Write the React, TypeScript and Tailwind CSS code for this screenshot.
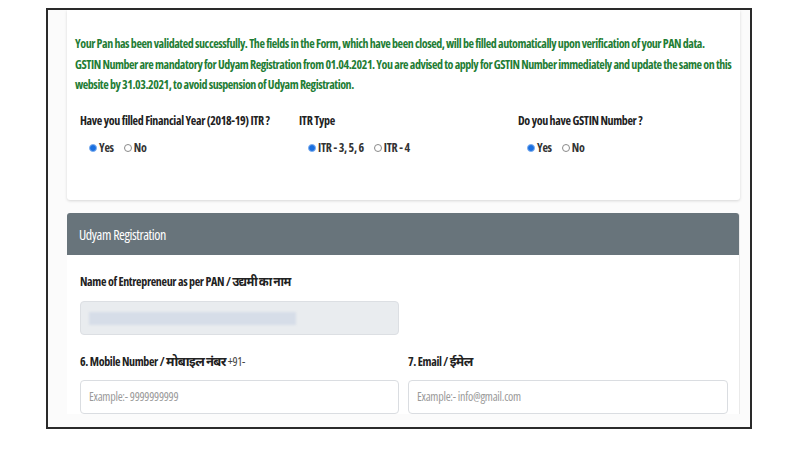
import React from "react";

const FONT = "font-['Open_Sans','Noto_Sans',sans-serif] font-stretch-75%";

function Radio({ checked, label }: { checked?: boolean; label: string }) {
  return (
    <span className="flex items-center gap-[2px]">
      {checked ? (
        <span className="h-[8px] w-[8px] rounded-full border border-[#7fb0ef] bg-[#1a6fe0]" />
      ) : (
        <span className="h-[8px] w-[8px] rounded-full border border-[#8a8a8a] bg-white" />
      )}
      <span className="text-[12px] font-bold tracking-[-0.3px] text-[#333]">{label}</span>
    </span>
  );
}

function Question({ title, options }: { title: string; options: { label: string; checked?: boolean }[] }) {
  return (
    <div>
      <p className="whitespace-nowrap text-[12px] font-bold tracking-[-0.35px] text-[#222]">{title}</p>
      <div className="mt-[9px] flex gap-[10px] pl-[9px]">
        {options.map((o) => <Radio key={o.label} label={o.label} checked={o.checked} />)}
      </div>
    </div>
  );
}

export default function App() {
  return (
    <div className={`h-[454px] w-[793px] bg-white pl-[46px] pt-[8px] ${FONT}`}>
      <div className="h-[421px] w-[706px] overflow-hidden border-2 border-[#2a2a2a] bg-[#fbfbfb] pl-[19px] pr-[10px]">
        <section className="h-[190px] rounded-b-[3px] bg-white px-[8px] pt-[24px] shadow-[0_1px_3px_rgba(0,0,0,0.15)]">
          <p className="whitespace-nowrap text-[12px] font-bold leading-[20.5px] tracking-[-0.45px] text-[#1f7d35]">
            Your Pan has been validated successfully. The fields in the Form, which have been closed, will be filled automatically upon verification of your PAN data.
            <br />
            GSTIN Number are mandatory for Udyam Registration from 01.04.2021. You are advised to apply for GSTIN Number immediately and update the same on this
            <br />
            website by 31.03.2021, to avoid suspension of Udyam Registration.
          </p>
          <div className="mt-[16px] grid grid-cols-[219px_219px_219px] pl-[5px]">
            <Question title="Have you filled Financial Year (2018-19) ITR ?" options={[{ label: "Yes", checked: true }, { label: "No" }]} />
            <Question title="ITR Type" options={[{ label: "ITR - 3, 5, 6", checked: true }, { label: "ITR - 4" }]} />
            <Question title="Do you have GSTIN Number ?" options={[{ label: "Yes", checked: true }, { label: "No" }]} />
          </div>
        </section>

        <section className="mt-[13px] rounded-t-[3px] border-r border-[#eaeaea] bg-white">
          <header className="flex h-[42px] items-center rounded-t-[3px] bg-[#68747b] px-[12px]">
            <h2 className="text-[14px] font-normal tracking-[-0.4px] text-white">Udyam Registration</h2>
          </header>
          <div className="px-[13px] pt-[18px]">
            <label className="block text-[12px] font-bold tracking-[-0.35px] text-[#222]">
              Name of Entrepreneur as per PAN / <span className="text-[12px] tracking-[-0.6px]">उद्यमी का नाम</span>
            </label>
            <div className="mt-[10px] flex h-[34px] w-[319px] items-center rounded-[4px] border border-[#dcdfe3] bg-[#e9ecef] px-[8px]">
              <div className="h-[13px] w-[207px] bg-[#d6dde8] blur-[1px]" />
            </div>
            <div className="mt-[17px] grid grid-cols-[319px_320px] gap-[9px]">
              <div>
                <label className="block text-[12px] font-bold tracking-[-0.35px] text-[#222]">
                  6. Mobile Number / <span className="text-[13px] tracking-[-0.6px]">मोबाइल नंबर</span> <span className="font-normal text-[#444]">+91-</span>
                </label>
                <div className="mt-[8px] flex h-[34px] items-center rounded-[4px] border border-[#dadde1] bg-white px-[8px] text-[12px] tracking-[-0.25px] text-[#9a9a9a]">
                  Example:- 9999999999
                </div>
              </div>
              <div>
                <label className="block text-[12px] font-bold tracking-[-0.35px] text-[#222]">
                  7. Email / <span className="text-[13px] tracking-[-0.6px]">ईमेल</span>
                </label>
                <div className="mt-[8px] flex h-[34px] items-center rounded-[4px] border border-[#dadde1] bg-white px-[8px] text-[12px] tracking-[-0.25px] text-[#9a9a9a]">
                  Example:- info@gmail.com
                </div>
              </div>
            </div>
          </div>
        </section>
      </div>
    </div>
  );
}
